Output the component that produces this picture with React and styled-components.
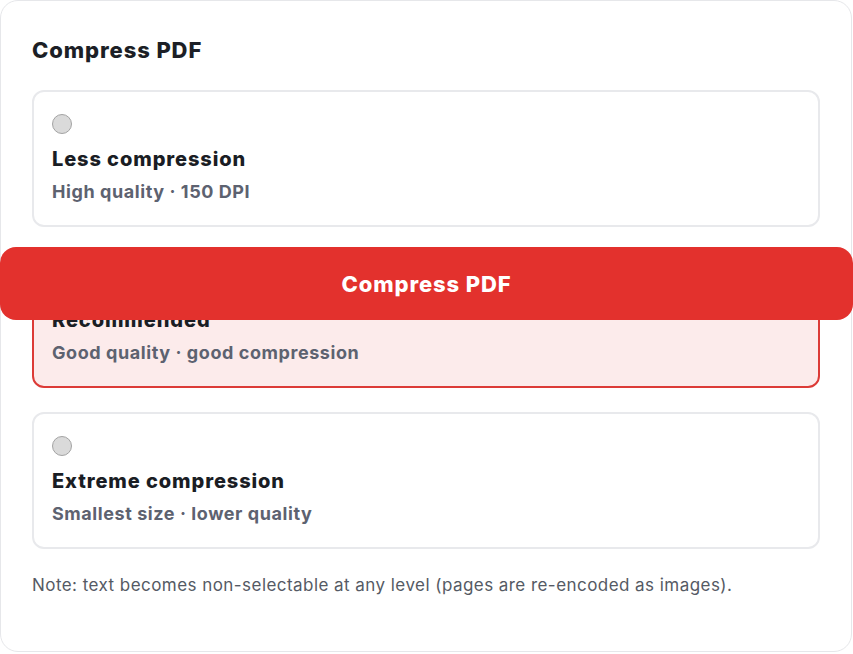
import styled, { createGlobalStyle } from 'styled-components';

const GlobalStyle = createGlobalStyle`
  html, body {
    margin: 0;
    padding: 0;
    background: #ffffff;
  }
  body {
    font-family: Inter, "Liberation Sans", Arial, sans-serif;
    -webkit-font-smoothing: antialiased;
  }
  * {
    box-sizing: border-box;
  }
`;

const Page = styled.div`
  position: relative;
  width: 853px;
  height: 654px;
`;

const Panel = styled.section`
  width: 852px;
  height: 652px;
  border: 1px solid #e6e7ea;
  border-radius: 18px;
  background: #ffffff;
  padding: 35px 31px 32px;
  display: flex;
  flex-direction: column;
`;

const Title = styled.h2`
  margin: 0 0 26px;
  font-size: 22px;
  line-height: 28px;
  font-weight: 800;
  letter-spacing: 0.9px;
  color: #1c1f26;
`;

const Options = styled.div`
  display: flex;
  flex-direction: column;
  gap: 24px;
`;

const Option = styled.label`
  display: flex;
  flex-direction: column;
  align-items: flex-start;
  padding: 22px 18px 21px;
  border: 2px solid ${(p) => (p.$active ? '#dc3b37' : '#e8e9ec')};
  border-radius: 12px;
  background: ${(p) => (p.$active ? '#fcebeb' : '#ffffff')};
  cursor: pointer;
`;

const Radio = styled.span`
  width: 20px;
  height: 20px;
  border-radius: 50%;
  border: 1px solid ${(p) => (p.$checked ? '#dc3b37' : '#a3a3a3')};
  background: ${(p) => (p.$checked ? '#ffffff' : '#dadada')};
  display: flex;
  align-items: center;
  justify-content: center;
  margin-bottom: 12px;

  &::after {
    content: '';
    display: ${(p) => (p.$checked ? 'block' : 'none')};
    width: 10px;
    height: 10px;
    border-radius: 50%;
    background: #dc3b37;
  }
`;

const OptionTitle = styled.div`
  font-size: 20px;
  line-height: 26px;
  font-weight: 800;
  letter-spacing: 0.9px;
  color: #1a1d24;
`;

const OptionDesc = styled.div`
  margin-top: 8px;
  font-size: 18px;
  line-height: 24px;
  font-weight: 700;
  letter-spacing: 0.57px;
  color: #5d6270;
`;

const Note = styled.p`
  margin: 24px 0 0;
  font-size: 17px;
  line-height: 24px;
  letter-spacing: 0.45px;
  color: #555a64;
`;

const CompressButton = styled.button`
  position: absolute;
  top: 247px;
  left: 0;
  width: 853px;
  height: 73px;
  border: none;
  border-radius: 16px;
  background: #e3312d;
  color: #ffffff;
  font-family: inherit;
  font-size: 22px;
  font-weight: 800;
  letter-spacing: 0.9px;
  cursor: pointer;
  z-index: 2;
`;

const levels = [
  { id: 'less', title: 'Less compression', desc: 'High quality · 150 DPI' },
  { id: 'recommended', title: 'Recommended', desc: 'Good quality · good compression' },
  { id: 'extreme', title: 'Extreme compression', desc: 'Smallest size · lower quality' },
];

const App = () => {
  const selected = 'recommended';

  return (
    <Page>
      <GlobalStyle />
      <Panel>
        <Title>Compress PDF</Title>
        <Options>
          {levels.map((level) => (
            <Option key={level.id} $active={level.id === selected}>
              <Radio $checked={level.id === selected} />
              <OptionTitle>{level.title}</OptionTitle>
              <OptionDesc>{level.desc}</OptionDesc>
            </Option>
          ))}
        </Options>
        <Note>Note: text becomes non-selectable at any level (pages are re-encoded as images).</Note>
      </Panel>
      <CompressButton>Compress PDF</CompressButton>
    </Page>
  );
};

export default App;
